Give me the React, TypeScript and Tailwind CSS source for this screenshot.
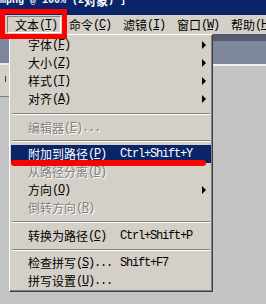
import React from "react";

type Item =
  | { sep: number }
  | {
      cn: string;
      k: string;
      tail?: string;
      shortcut?: string;
      arrow?: boolean;
      disabled?: boolean;
      active?: boolean;
    };

const ITEMS: Item[] = [
  { cn: "字体", k: "F", arrow: true },
  { cn: "大小", k: "Z", arrow: true },
  { cn: "样式", k: "T", arrow: true },
  { cn: "对齐", k: "A", arrow: true },
  { sep: 11 },
  { cn: "编辑器", k: "E", tail: "...", disabled: true },
  { sep: 8 },
  { cn: "附加到路径", k: "P", shortcut: "Ctrl+Shift+Y", active: true },
  { cn: "从路径分离", k: "D", disabled: true },
  { cn: "方向", k: "O", arrow: true },
  { cn: "倒转方向", k: "R", disabled: true },
  { sep: 10 },
  { cn: "转换为路径", k: "C", shortcut: "Ctrl+Shift+P" },
  { sep: 9 },
  { cn: "检查拼写", k: "S", tail: "...", shortcut: "Shift+F7" },
  { cn: "拼写设置", k: "U", tail: "..." },
];

const BAR = [
  { cn: "文本", k: "T" },
  { cn: "命令", k: "C" },
  { cn: "滤镜", k: "I" },
  { cn: "窗口", k: "W" },
  { cn: "帮助", k: "H" },
];

function Label({ cn, k, tail }: { cn: string; k: string; tail?: string }) {
  return (
    <span className="flex items-center whitespace-nowrap">
      <span className="font-['Noto_Sans_CJK_SC',sans-serif] text-[12px] leading-[14px]">{cn}</span>
      <span className="font-['Liberation_Mono',monospace] text-[12px] leading-[14px] tracking-[-1.2px]">
        (<span className="underline underline-offset-[1px]">{k}</span>){tail}
      </span>
    </span>
  );
}

function Row({ item }: { item: Exclude<Item, { sep: number }> }) {
  const tone = item.active
    ? "bg-[#0a246a] text-white"
    : item.disabled
      ? "text-[#808080] [text-shadow:1px_1px_0_#ffffff]"
      : "text-black";
  return (
    <div className={`flex h-[18px] items-center pl-[17px] pr-[5px] ${tone}`}>
      <div className="w-[92px]">
        <Label cn={item.cn} k={item.k} tail={item.tail} />
      </div>
      {item.shortcut && (
        <span className="font-['Liberation_Mono',monospace] text-[12px] leading-[14px] tracking-[-1.2px]">
          {item.shortcut}
        </span>
      )}
      {item.arrow && (
        <span className="ml-auto h-0 w-0 border-y-[4px] border-l-[4px] border-y-transparent border-l-black" />
      )}
    </div>
  );
}

export default function App() {
  return (
    <div className="relative h-[304px] w-[266px] overflow-hidden bg-[#c4c4c4]">
      {/* title bar, clipped at the top */}
      <div className="h-[15px] overflow-hidden bg-[#0a246a] text-white">
        <div className="-mt-[6px] flex items-center whitespace-nowrap font-bold">
          <span className="font-['Liberation_Mono',monospace] text-[10px] leading-[14px]">mpng @ 100% (2 </span>
          <span className="font-['Noto_Sans_CJK_SC',sans-serif] text-[12px] leading-[14px]">对象</span>
          <span className="font-['Liberation_Mono',monospace] text-[10px] leading-[14px]">)*]</span>
        </div>
      </div>

      {/* menu bar */}
      <div className="flex h-[19px] items-center bg-[#d4d0c8] pl-[7px] text-black">
        {BAR.map((b, i) => (
          <div
            key={b.k}
            className={`flex h-[17px] w-[54px] shrink-0 items-center pl-[7px] ${
              i === 0 ? "border-b border-l border-r border-t border-b-white border-l-[#808080] border-r-white border-t-[#808080]" : "border border-transparent"
            }`}
          >
            <Label cn={b.cn} k={b.k} />
          </div>
        ))}
      </div>

      <div className="flex h-[270px]">
        {/* window behind, left */}
        <div className="flex w-[9px] flex-col">
          <div className="h-[29px] bg-[#7d869c]" />
          <div className="h-[2px] bg-[#eeeeee]" />
          <div className="relative h-[31px] bg-[#d4d0c8]">
            <div className="absolute left-[5px] top-[11px] h-[6px] w-px bg-[#404040]" />
          </div>
          <div className="h-px bg-[#808080]" />
          <div className="flex-1 bg-[#c4c4c4]" />
        </div>

        {/* dropdown */}
        <div className="h-[258px] w-[204px] border-b border-l border-r border-t border-b-[#404040] border-l-white border-r-[#404040] border-t-white bg-[#d4d0c8] px-[1px] pt-[1px] shadow-[inset_-1px_-1px_0_#808080]">
          {ITEMS.map((it, i) =>
            "sep" in it ? (
              <div key={i} className={`flex flex-col justify-center px-[1px] ${it.sep === 11 ? "h-[11px]" : it.sep === 10 ? "h-[10px]" : it.sep === 9 ? "h-[9px]" : "h-[8px]"}`}>
                <div className="h-px bg-[#808080]" />
                <div className="h-px bg-white" />
              </div>
            ) : (
              <Row key={i} item={it} />
            ),
          )}
        </div>

        {/* window behind, right */}
        <div className="flex flex-1 flex-col">
          <div className="h-[7px] bg-[#555b6b]" />
          <div className="h-[23px] bg-[#7f879d]" />
          <div className="h-[2px] bg-[#f2f2f2]" />
          <div className="flex-1 bg-[#c4c4c4]" />
        </div>
      </div>

      {/* red annotations */}
      <div className="absolute left-0 top-[9px] h-[30px] w-[67px] border-[5px] border-[#ff0000]" />
      <div className="absolute left-[11px] top-[160px] h-[6px] w-[195px] rounded-full bg-[#ff0000]" />
    </div>
  );
}
